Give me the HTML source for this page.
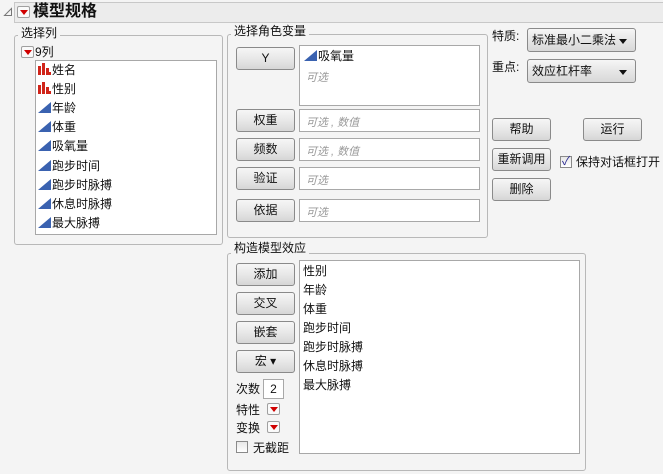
<!DOCTYPE html>
<html><head><meta charset="utf-8"><style>
*{box-sizing:border-box;margin:0;padding:0}
body{width:663px;height:474px;background:#f4f4f4;font-family:"Liberation Sans","Noto Sans CJK SC",sans-serif;font-size:12px;color:#111;position:relative;overflow:hidden}
.a{position:absolute}
.grp{position:absolute;border:1px solid #b8b8b8;border-radius:3px}
.lg{position:absolute;background:#f4f4f4;padding:0 3px;font-size:12px;line-height:14px}
.btn{position:absolute;border:1px solid #8a8a8a;border-radius:3px;background:linear-gradient(#f6f6f6,#e8e8e8 50%,#d6d6d6);text-align:center;font-size:12px;line-height:21px;width:59px;height:23px}
.box{position:absolute;background:#fff;border:1px solid #a8a8a8}
.ph{color:#9a9a9a;font-style:italic;font-size:11px}
.rd{position:absolute;width:13px;height:12px;border:1px solid #a0a0a0;border-radius:2px;background:#fafafa}
.rd:after{content:"";position:absolute;left:2px;top:3px;border-left:4px solid transparent;border-right:4px solid transparent;border-top:5px solid #d00000}
.it{position:absolute;line-height:19px;font-size:12px}
.tri{display:inline-block;width:0;height:0;border-left:13px solid transparent;border-bottom:11px solid #3a62b0;vertical-align:-1px;margin-right:1px}
.bar{display:inline-block;width:13px;height:12px;vertical-align:-1px;position:relative;margin-right:1px}
.bar i{position:absolute;bottom:0;background:#d0241a;width:3px}
.dd{position:absolute;border:1px solid #8a8a8a;border-radius:3px;background:linear-gradient(#f6f6f6,#e6e6e6 50%,#d8d8d8);height:24px;line-height:22px;padding-left:4px;font-size:12px}
.dd:after{content:"";position:absolute;right:8px;top:10px;border-left:4px solid transparent;border-right:4px solid transparent;border-top:5px solid #111}
.cb{position:absolute;width:12px;height:12px;border:1px solid #8a8a8a;background:linear-gradient(#e8e8e8,#fff)}
</style></head><body>
<svg class="a" style="left:3px;top:7px" width="10" height="10"><path d="M8.5 1.5 L8.5 8.5 L1.5 8.5 Z" fill="none" stroke="#777" stroke-width="1"/></svg>
<div class="a" style="left:14px;top:2px;width:649px;height:21px;background:#ececec;border:1px solid #c8c8c8;border-right:none"></div>
<div class="rd" style="left:17px;top:6px"></div>
<div class="a" style="left:33px;top:2px;font-size:16px;font-weight:bold;line-height:20px">模型规格</div>

<div class="grp" style="left:14px;top:35px;width:209px;height:210px"></div>
<div class="lg" style="left:18px;top:26px">选择列</div>
<div class="rd" style="left:21px;top:46px"></div>
<div class="a" style="left:35px;top:44px;line-height:16px">9列</div>
<div class="box" style="left:35px;top:60px;width:182px;height:175px"></div>
<div class="it" style="left:38px;top:61px"><span class="bar"><i style="left:0;height:9px"></i><i style="left:4px;height:12px"></i><i style="left:8px;height:7px"></i><i style="left:11px;height:3px;width:2px"></i></span>姓名</div>
<div class="it" style="left:38px;top:80px"><span class="bar"><i style="left:0;height:9px"></i><i style="left:4px;height:12px"></i><i style="left:8px;height:7px"></i><i style="left:11px;height:3px;width:2px"></i></span>性别</div>
<div class="it" style="left:38px;top:99px"><span class="tri"></span>年龄</div>
<div class="it" style="left:38px;top:118px"><span class="tri"></span>体重</div>
<div class="it" style="left:38px;top:137px"><span class="tri"></span>吸氧量</div>
<div class="it" style="left:38px;top:157px"><span class="tri"></span>跑步时间</div>
<div class="it" style="left:38px;top:176px"><span class="tri"></span>跑步时脉搏</div>
<div class="it" style="left:38px;top:195px"><span class="tri"></span>休息时脉搏</div>
<div class="it" style="left:38px;top:214px"><span class="tri"></span>最大脉搏</div>

<div class="grp" style="left:227px;top:34px;width:261px;height:204px"></div>
<div class="lg" style="left:231px;top:24px">选择角色变量</div>
<div class="btn" style="left:236px;top:47px">Y</div>
<div class="box" style="left:299px;top:45px;width:181px;height:61px"></div>
<div class="it" style="left:304px;top:47px"><span class="tri"></span>吸氧量</div>
<div class="a ph" style="left:306px;top:69px">可选</div>
<div class="btn" style="left:236px;top:109px">权重</div>
<div class="box" style="left:299px;top:109px;width:181px;height:23px"></div>
<div class="a ph" style="left:306px;top:114px">可选 , 数值</div>
<div class="btn" style="left:236px;top:138px">频数</div>
<div class="box" style="left:299px;top:138px;width:181px;height:23px"></div>
<div class="a ph" style="left:306px;top:143px">可选 , 数值</div>
<div class="btn" style="left:236px;top:167px">验证</div>
<div class="box" style="left:299px;top:167px;width:181px;height:23px"></div>
<div class="a ph" style="left:306px;top:172px">可选</div>
<div class="btn" style="left:236px;top:199px">依据</div>
<div class="box" style="left:299px;top:199px;width:181px;height:23px"></div>
<div class="a ph" style="left:306px;top:204px">可选</div>

<div class="a" style="left:492px;top:27px">特质:</div>
<div class="dd" style="left:527px;top:28px;width:109px">标准最小二乘法</div>
<div class="a" style="left:492px;top:58px">重点:</div>
<div class="dd" style="left:527px;top:59px;width:109px">效应杠杆率</div>
<div class="btn" style="left:492px;top:118px">帮助</div>
<div class="btn" style="left:583px;top:118px">运行</div>
<div class="btn" style="left:492px;top:148px">重新调用</div>
<div class="cb" style="left:560px;top:156px"></div>
<div class="a" style="left:562px;top:152px;color:#2a2a90;font-size:12px">✓</div>
<div class="a" style="left:576px;top:153px">保持对话框打开</div>
<div class="btn" style="left:492px;top:178px">删除</div>

<div class="grp" style="left:227px;top:253px;width:359px;height:218px"></div>
<div class="lg" style="left:231px;top:241px">构造模型效应</div>
<div class="btn" style="left:236px;top:263px">添加</div>
<div class="btn" style="left:236px;top:292px">交叉</div>
<div class="btn" style="left:236px;top:321px">嵌套</div>
<div class="btn" style="left:236px;top:350px">宏 ▾</div>
<div class="a" style="left:236px;top:380px">次数</div>
<div class="box" style="left:263px;top:379px;width:21px;height:20px;text-align:center;line-height:18px">2</div>
<div class="a" style="left:236px;top:401px">特性</div>
<div class="rd" style="left:267px;top:403px"></div>
<div class="a" style="left:236px;top:419px">变换</div>
<div class="rd" style="left:267px;top:421px"></div>
<div class="cb" style="left:236px;top:441px"></div>
<div class="a" style="left:253px;top:439px">无截距</div>
<div class="box" style="left:299px;top:260px;width:281px;height:194px"></div>
<div class="it" style="left:303px;top:262px">性别</div>
<div class="it" style="left:303px;top:281px">年龄</div>
<div class="it" style="left:303px;top:300px">体重</div>
<div class="it" style="left:303px;top:319px">跑步时间</div>
<div class="it" style="left:303px;top:338px">跑步时脉搏</div>
<div class="it" style="left:303px;top:357px">休息时脉搏</div>
<div class="it" style="left:303px;top:376px">最大脉搏</div>
</body></html>
